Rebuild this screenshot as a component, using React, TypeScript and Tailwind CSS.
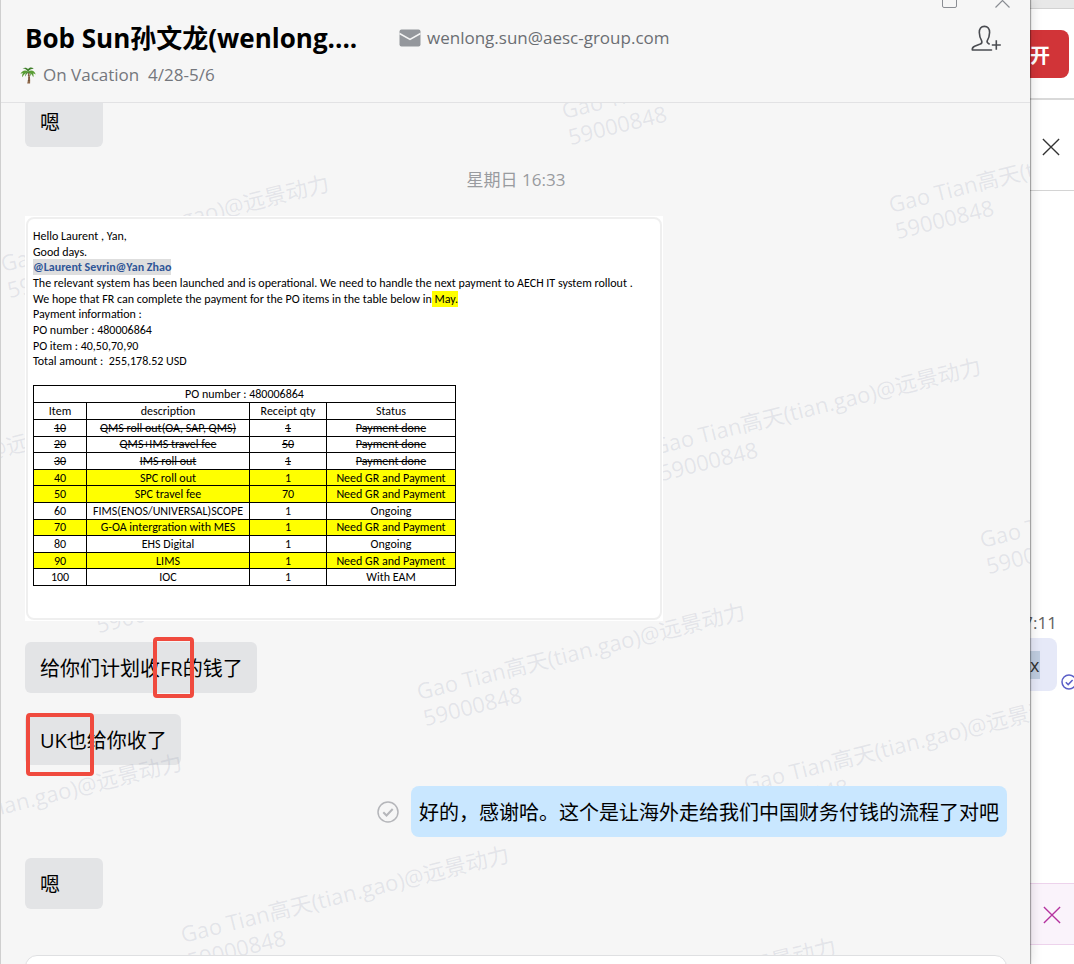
import type { ReactNode } from "react";

const watermarks: [number, number][] = [
  [563, 119], [890, 213], [2, 272], [327, 363], [654, 455], [981, 548],
  [-235, 515], [91, 607], [418, 700], [745, 792], [-145, 851], [182, 943], [509, 1035],
];

type Row = { cells: [string, string, string, string]; state?: "done" | "due" };

const rows: Row[] = [
  { cells: ["10", "QMS roll out(OA, SAP, QMS)", "1", "Payment done"], state: "done" },
  { cells: ["20", "QMS+IMS travel fee", "50", "Payment done"], state: "done" },
  { cells: ["30", "IMS roll out", "1", "Payment done"], state: "done" },
  { cells: ["40", "SPC roll out", "1", "Need GR and Payment"], state: "due" },
  { cells: ["50", "SPC travel fee", "70", "Need GR and Payment"], state: "due" },
  { cells: ["60", "FIMS(ENOS/UNIVERSAL)SCOPE", "1", "Ongoing"] },
  { cells: ["70", "G-OA intergration with MES", "1", "Need GR and Payment"], state: "due" },
  { cells: ["80", "EHS Digital", "1", "Ongoing"] },
  { cells: ["90", "LIMS", "1", "Need GR and Payment"], state: "due" },
  { cells: ["100", "IOC", "1", "With EAM"] },
];

const rowStyle = { done: "line-through", due: "bg-[#ffff00]" };

function Watermark() {
  return (
    <svg className="pointer-events-none absolute inset-0 h-full w-full" aria-hidden="true">
      {watermarks.map(([x, y]) => (
        <g key={`${x},${y}`} transform={`translate(${x} ${y - 103}) rotate(-14)`} fill="#8086a3" fillOpacity="0.16" fontSize="22">
          <text x="0" y="0">Gao Tian高天(tian.gao)@远景动力</text>
          <text x="0" y="27">59000848</text>
        </g>
      ))}
    </svg>
  );
}

function Palm() {
  return (
    <svg width="16" height="17" viewBox="0 0 16 17" aria-hidden="true">
      <path d="M7.4 5.5C8.6 8.5 8.6 12 7.2 16.4h2.9C10.4 12 10 8.500 8.900 5.200Z" fill="#8d6748" />
      <path d="M7.800 8.500l1.800-.3M8 11l2-.3M7.800 13.500l2.200-.3" stroke="#5f422d" strokeWidth=".6" />
      <path d="M8 4.500C5.500 2.500 2 3.300.400 7c1.100-.8 1.800-.9 2.600-.6-.9.9-1.100 2.200-.6 3.800C3.300 8 5 6.300 8 5.200c2.600.8 4.400 2.500 5.200 5 .6-1.500.5-2.700-.3-3.800 1 0 1.900.3 2.800 1.100C14.500 3.400 11.300 2.500 8 4.500Z" fill="#5a9e35" />
      <path d="M8 4.800C6.800 2.600 5 1.300 2.500 1.600 4.500.2 7 .500 8 2.200 9.300.200 11.800.100 13.800 1.700 11.300 1.600 9.400 2.700 8 4.800Z" fill="#3f7f2a" />
      <path d="M7.800 5C6 5.600 5 7.400 5.200 9.800 5.900 8 7 6.500 8.200 5.500c1.500.8 2.300 2.200 2.600 4C11.300 7.500 10.500 5.700 8.500 4.800Z" fill="#3f7f2a" />
    </svg>
  );
}

function Cross({ className }: { className: string }) {
  return (
    <svg className={className} width="20" height="20" viewBox="0 0 20 20" fill="none" stroke="currentColor" strokeWidth="1.500" aria-hidden="true">
      <path d="M1 1 19 19M19 1 1 19" />
    </svg>
  );
}

function Bubble({ children }: { children: ReactNode }) {
  return (
    <div className="relative flex h-[51px] min-w-[78px] items-center self-start rounded-md bg-[#e3e4e6] pt-[2px] pr-[14px] pl-[15px] text-xl whitespace-nowrap text-black">
      {children}
    </div>
  );
}

function MailPicture() {
  return (
    <div className="relative z-10 w-[638px] shrink-0 self-start bg-white p-px text-xs text-black font-['Carlito','Lato',sans-serif]">
      <div className="flex h-[403px] flex-col rounded-lg border-2 border-[#efefef] px-[5px] pt-[9px]">
        <div className="grid h-[141px] auto-rows-fr items-center whitespace-pre">
          <p>Hello Laurent , Yan,</p>
          <p>Good days.</p>
          <p>
            <a href="#mention" className="inline-block bg-[#dedede] font-bold text-[#2f5597]">@Laurent Sevrin@Yan Zhao</a>
          </p>
          <p>The relevant system has been launched and is operational. We need to handle the next payment to AECH IT system rollout .</p>
          <p>
            We hope that FR can complete the payment for the PO items in the table below in
            <mark className="inline-block bg-[#ffff00] text-black"> May.</mark>
          </p>
          <p>Payment information :</p>
          <p>PO number : 480006864</p>
          <p>PO item : 40,50,70,90</p>
          <p>Total amount :  255,178.52 USD</p>
        </div>
        <table className="mt-4 h-[201px] w-[423px] table-fixed border-collapse text-center leading-[14px] whitespace-nowrap">
          <colgroup>
            <col className="w-[53px]" />
            <col className="w-[163px]" />
            <col className="w-[77px]" />
            <col />
          </colgroup>
          <thead>
            <tr className="h-[17px]">
              <th colSpan={4} className="border border-black p-0 font-normal">PO number : 480006864</th>
            </tr>
            <tr className="h-[17px]">
              {["Item", "description", "Receipt qty", "Status"].map((name) => (
                <th key={name} className="border border-black p-0 font-normal">{name}</th>
              ))}
            </tr>
          </thead>
          <tbody>
            {rows.map(({ cells, state }) => (
              <tr key={cells[0]} className={state ? rowStyle[state] : ""}>
                {cells.map((cell, i) => (
                  <td key={i} className="border border-black p-0">{cell}</td>
                ))}
              </tr>
            ))}
          </tbody>
        </table>
      </div>
    </div>
  );
}

export default function App() {
  return (
    <div className="flex h-screen overflow-hidden bg-white font-['Segoe_UI','Open_Sans','Noto_Sans_CJK_SC',sans-serif]">
      <main className="relative z-10 flex min-w-0 flex-1 flex-col border-l border-[#cfcfcf] bg-[#f6f6f6] shadow-[1px_0_1px_#00000050,3px_0_10px_#0000001a]">
        <header className="flex h-[103px] shrink-0 flex-col border-b border-[#e2e2e4]">
          <div className="flex h-2 items-end justify-end gap-[38px] overflow-hidden pr-5 text-[#8a8d93]">
            <button aria-label="Maximize" className="h-[15px] w-[15px] rounded-xs border border-current" />
            <button aria-label="Close">
              <svg width="15" height="15" viewBox="0 0 15 15" stroke="currentColor" strokeWidth="1.200" aria-hidden="true">
                <path d="M.5.5l14 14M14.500.500l-14 14" />
              </svg>
            </button>
          </div>
          <div className="flex items-center pt-[10px] pr-7 pl-6">
            <h1 className="w-[374px] text-[26px] leading-10 font-bold whitespace-nowrap text-black">Bob Sun孙文龙(wenlong....</h1>
            <a href="mailto:wenlong.sun@aesc-group.com" className="flex items-center gap-[6px] text-[17px] leading-10 text-[#6b6e73]">
              <svg width="22" height="18" viewBox="0 0 22 18" aria-hidden="true">
                <rect x=".5" y=".5" width="21" height="17" rx="2" fill="#94979c" />
                <path d="M.5 4.500 11 10.500 21.500 4.500" fill="none" stroke="#f5f5f5" strokeWidth="1.500" />
              </svg>
              wenlong.sun@aesc-group.com
            </a>
            <button aria-label="Add member" className="ml-auto text-[#4a4c51]">
              <svg width="31" height="27" viewBox="0 0 31 27" fill="none" stroke="currentColor" strokeWidth="1.600" strokeLinecap="round" strokeLinejoin="round" aria-hidden="true">
                <path d="M20.500 25H1.300C1.100 22.900 1.800 21.900 3.600 21.200L9.300 19C10.700 18.400 11.200 17.300 10.700 15.900C9.200 13.600 8.400 11 8.300 7.600C8.200 3.700 10.100 1.400 13.400 1.400C16.700 1.400 18.700 3.700 18.600 7.600C18.500 11 17.600 13.600 16.200 15.900C15.700 17.200 16.200 18 18.200 19" />
                <path d="M20.800 20H29.800M25.300 15.300V24.700" strokeLinecap="butt" />
              </svg>
            </button>
          </div>
          <div className="flex items-center gap-[7px] pt-px pl-[19px] text-[17px] leading-8 whitespace-pre text-[#74777d]">
            <Palm />
            <span>On Vacation  4/28-5/6</span>
          </div>
        </header>

        <section className="relative min-h-0 flex-1 overflow-hidden">
          <div className="-mt-[7px] flex flex-col gap-[21px] pr-[23px] pl-6">
            <Bubble>嗯</Bubble>
            <time className="self-center pb-[3px] text-[17px] leading-6 text-[#999b9f]">星期日 16:33</time>
            <MailPicture />
            <Bubble>
              给你们计划收FR的钱了
              <span className="absolute -top-[5px] left-32 h-[61px] w-[41px] rounded border-4 border-[#f04a3e]" />
            </Bubble>
            <Bubble>
              UK也给你收了
              <span className="absolute -top-px left-px h-[63px] w-[68px] rounded border-4 border-[#f04a3e]" />
            </Bubble>
            <div className="relative z-10 flex items-center gap-3 self-end">
              <svg width="22" height="22" viewBox="0 0 22 22" fill="none" stroke="#b5b6ba" strokeWidth="1.500" aria-hidden="true">
                <circle cx="11" cy="11" r="10" />
                <path d="M6.300 11.300 9.500 14.500 15.700 8" strokeWidth="2" />
              </svg>
              <div className="flex h-[51px] items-center rounded-lg bg-[#c9e7ff] px-2 pt-[2px] text-xl whitespace-nowrap text-black">
                好的，感谢哈。这个是让海外走给我们中国财务付钱的流程了对吧
              </div>
            </div>
            <Bubble>嗯</Bubble>
          </div>
          <Watermark />
        </section>

        <footer className="h-[9px] shrink-0 overflow-hidden pr-[23px] pl-6">
          <input aria-label="Message" className="block h-10 w-full rounded-xl border border-[#dfe0e2] bg-white" />
        </footer>
      </main>

      <aside className="flex w-11 shrink-0 flex-col overflow-hidden bg-white">
        <div className="h-[9px] shrink-0 border-b border-[#d2d2d2] bg-[#e8e8e8]" />
        <div className="h-[91px] shrink-0 border-b-2 border-[#d9d9d9] pt-[21px]">
          <button className="flex h-12 w-[39px] items-center justify-end rounded-r-lg bg-[#d13438] pt-1 pr-[19px] text-xl font-bold text-white">开</button>
        </div>
        <div className="flex h-[91px] shrink-0 items-center justify-center border-b border-[#d4d4d4] pt-1 pr-[2px]">
          <button aria-label="Close panel"><Cross className="h-[18px] w-[18px] text-[#333]" /></button>
        </div>
        <div className="flex min-h-0 flex-1 flex-col">
          <time className="mt-[420px] flex h-[27px] w-[27px] justify-end text-[17px] leading-6 text-[#616161]">7:11</time>
          <div className="flex items-end">
            <p className="flex h-[53px] w-[27px] shrink-0 items-center rounded-r-lg bg-[#e6e9f8]">
              <span className="h-7 w-[10px] bg-[#bfcde0] text-lg leading-7 text-[#333]">x</span>
            </p>
            <svg className="ml-1 shrink-0" width="16" height="18" viewBox="0 0 16 18" fill="none" stroke="#5b5fc7" strokeWidth="1.500" aria-hidden="true">
              <circle cx="8" cy="9" r="7" />
              <path d="M4.800 9.200 7.200 11.600 11.600 7" />
            </svg>
          </div>
        </div>
        <div className="mb-[19px] flex h-[62px] shrink-0 items-center justify-center border-y border-[#edd3ec] bg-[#faf3fb] pt-px">
          <button aria-label="Dismiss"><Cross className="h-[18px] w-[18px] text-[#b4329f]" /></button>
        </div>
      </aside>
    </div>
  );
}
